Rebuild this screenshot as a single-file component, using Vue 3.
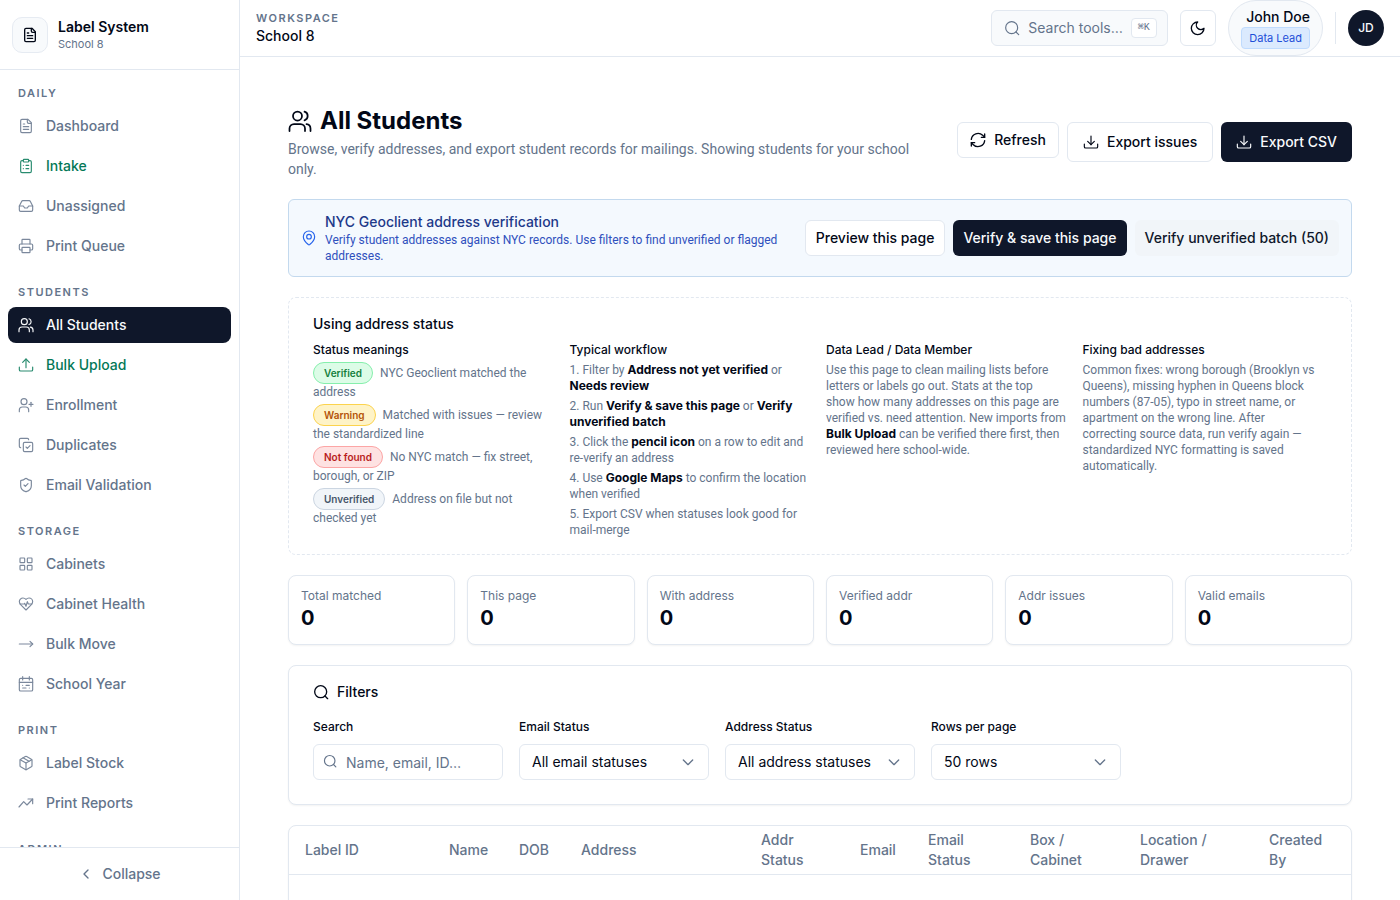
<script setup>
import { ref } from 'vue'

const icons = {
  file: '<path d="M15 2H6a2 2 0 0 0-2 2v16a2 2 0 0 0 2 2h12a2 2 0 0 0 2-2V7Z"/><path d="M14 2v4a2 2 0 0 0 2 2h4"/><path d="M10 9H8"/><path d="M16 13H8"/><path d="M16 17H8"/>',
  clipboard: '<rect width="8" height="4" x="8" y="2" rx="1"/><path d="M16 4h2a2 2 0 0 1 2 2v14a2 2 0 0 1-2 2H6a2 2 0 0 1-2-2V6a2 2 0 0 1 2-2h2"/><path d="M12 11h4"/><path d="M12 16h4"/><path d="M8 11h.01"/><path d="M8 16h.01"/>',
  inbox: '<path d="M22 12h-6l-2 3h-4l-2-3H2"/><path d="M5.45 5.11 2 12v6a2 2 0 0 0 2 2h16a2 2 0 0 0 2-2v-6l-3.45-6.89A2 2 0 0 0 16.76 4H7.24a2 2 0 0 0-1.79 1.11z"/>',
  printer: '<path d="M6 18H4a2 2 0 0 1-2-2v-5a2 2 0 0 1 2-2h16a2 2 0 0 1 2 2v5a2 2 0 0 1-2 2h-2"/><path d="M6 9V3a1 1 0 0 1 1-1h10a1 1 0 0 1 1 1v6"/><rect x="6" y="14" width="12" height="8" rx="1"/>',
  users: '<circle cx="9.500" cy="7" r="4.500"/><path d="M1.500 22v-2.500a4.500 4.500 0 0 1 4.500-4.500h6.500a4.500 4.500 0 0 1 4.500 4.500V22"/><path d="M16.500 2.700a4.500 4.500 0 0 1 0 8.600"/><path d="M18.500 15.200a4.500 4.500 0 0 1 4 4.300V22"/>',
  upload: '<path d="M12 16V3"/><path d="m7 8 5-5 5 5"/><path d="M2 15v4a2 2 0 0 0 2 2h16a2 2 0 0 0 2-2v-4"/>',
  userPlus: '<circle cx="9" cy="7" r="4.500"/><path d="M2 22v-2.500A4.500 4.500 0 0 1 6.500 15h5a4.500 4.500 0 0 1 4.500 4.500V22"/><path d="M19.500 8v6"/><path d="M22.500 11h-6"/>',
  copyCheck: '<path d="m12 15 2 2 4-4"/><rect width="14" height="14" x="8" y="8" rx="2"/><path d="M4 16a2 2 0 0 1-2-2V4a2 2 0 0 1 2-2h10a2 2 0 0 1 2 2"/>',
  shield: '<path d="M20 13c0 5-3.500 7.500-7.660 8.950a1 1 0 0 1-.67-.01C7.500 20.500 4 18 4 13V6a1 1 0 0 1 1-1c2 0 4.500-1.200 6.240-2.720a1.170 1.170 0 0 1 1.520 0C14.510 3.810 17 5 19 5a1 1 0 0 1 1 1z"/><path d="m9 12 2 2 4-4"/>',
  grid: '<rect width="7" height="7" x="3" y="3" rx="1"/><rect width="7" height="7" x="14" y="3" rx="1"/><rect width="7" height="7" x="14" y="14" rx="1"/><rect width="7" height="7" x="3" y="14" rx="1"/>',
  heart: '<path d="M19 14c1.490-1.460 3-3.210 3-5.500A5.500 5.500 0 0 0 16.500 3c-1.760 0-3 .5-4.500 2-1.500-1.500-2.740-2-4.500-2A5.500 5.500 0 0 0 2 8.500c0 2.300 1.500 4.050 3 5.500l7 7Z"/><path d="M3.220 12H9.500l.5-1 2 4.500 2-7 1.500 3.500h5.270"/>',
  arrow: '<path d="m18 8 4 4-4 4"/><path d="M2 12h20"/>',
  calendar: '<path d="M7 1v5"/><path d="M17 1v5"/><rect width="20" height="19" x="2" y="3.500" rx="2"/><path d="M2 9.500h20"/><path d="M7 14h.01"/><path d="M12 14h5"/><path d="M7 18h5"/><path d="M17 18h.01"/>',
  box: '<path d="M11 21.730a2 2 0 0 0 2 0l7-4A2 2 0 0 0 21 16V8a2 2 0 0 0-1-1.730l-7-4a2 2 0 0 0-2 0l-7 4A2 2 0 0 0 3 8v8a2 2 0 0 0 1 1.730z"/><path d="M12 22V12"/><path d="m3.300 7 8.700 5 8.700-5"/><path d="m7.500 4.270 9 5.150"/>',
  trend: '<path d="M15 6h7v7"/><path d="m22 6-8.500 9-5-5L1.500 18"/>',
  chevronLeft: '<path d="m15 18-6-6 6-6"/>',
  chevronDown: '<path d="m5 9 7 7 7-7"/>',
  search: '<circle cx="11.500" cy="11.500" r="9"/><path d="m22 22-4-4"/>',
  moon: '<path d="M11.500 3a6.500 6.500 0 0 0 9.500 9.500 9.500 9.500 0 1 1-9.500-9.500Z"/>',
  refresh: '<path d="M2 11a10 10 0 0 1 17-6l3 3"/><path d="M22 3v5h-5"/><path d="M22 13a10 10 0 0 1-17 6l-3-3"/><path d="M2 21v-5h5"/>',
  download: '<path d="M12 3v13"/><path d="m7 11 5 5 5-5"/><path d="M2 15v4a2 2 0 0 0 2 2h16a2 2 0 0 0 2-2v-4"/>',
  pin: '<path d="M20.500 10c0 5-5.500 10.200-7.400 11.800a1.800 1.800 0 0 1-2.200 0C9 20.200 3.500 15 3.500 10a8.500 8.500 0 0 1 17 0"/><circle cx="12" cy="10" r="3.500"/>'
}

const groups = [
  { title: 'Daily', items: [
    { label: 'Dashboard', icon: 'file' },
    { label: 'Intake', icon: 'clipboard', tone: 'green' },
    { label: 'Unassigned', icon: 'inbox' },
    { label: 'Print Queue', icon: 'printer' }
  ] },
  { title: 'Students', items: [
    { label: 'All Students', icon: 'users', tone: 'active' },
    { label: 'Bulk Upload', icon: 'upload', tone: 'green' },
    { label: 'Enrollment', icon: 'userPlus' },
    { label: 'Duplicates', icon: 'copyCheck' },
    { label: 'Email Validation', icon: 'shield' }
  ] },
  { title: 'Storage', items: [
    { label: 'Cabinets', icon: 'grid' },
    { label: 'Cabinet Health', icon: 'heart' },
    { label: 'Bulk Move', icon: 'arrow' },
    { label: 'School Year', icon: 'calendar' }
  ] },
  { title: 'Print', items: [
    { label: 'Label Stock', icon: 'box' },
    { label: 'Print Reports', icon: 'trend' }
  ] },
  { title: 'Admin', items: [] }
]

const meanings = [
  { tag: 'Verified', tone: 'ok', text: 'NYC Geoclient matched the address' },
  { tag: 'Warning', tone: 'warn', text: 'Matched with issues — review the standardized line' },
  { tag: 'Not found', tone: 'bad', text: 'No NYC match — fix street, borough, or ZIP' },
  { tag: 'Unverified', tone: 'none', text: 'Address on file but not checked yet' }
]

const stats = ['Total matched', 'This page', 'With address', 'Verified addr', 'Addr issues', 'Valid emails']

const selects = [
  { id: 'email-status', label: 'Email Status', option: 'All email statuses' },
  { id: 'address-status', label: 'Address Status', option: 'All address statuses' },
  { id: 'rows', label: 'Rows per page', option: '50 rows' }
]

const columns = [
  { label: 'Label ID', width: 144 },
  { label: 'Name', width: 70 },
  { label: 'DOB', width: 62 },
  { label: 'Address', width: 180 },
  { label: 'Addr Status', width: 99 },
  { label: 'Email', width: 68 },
  { label: 'Email Status', width: 102 },
  { label: 'Box / Cabinet', width: 110 },
  { label: 'Location / Drawer', width: 129 },
  { label: 'Created By', width: 98 }
]

const query = ref('')
</script>

<template>
  <div class="app">
    <aside class="sidebar">
      <div class="brand">
        <span class="logo"><svg class="icon" viewBox="0 0 24 24" v-html="icons.file" /></span>
        <div>
          <div class="brand-name">Label System</div>
          <div class="brand-sub">School 8</div>
        </div>
      </div>
      <nav class="nav">
        <section v-for="g in groups" :key="g.title" class="group">
          <h2>{{ g.title }}</h2>
          <a v-for="i in g.items" :key="i.label" href="#" class="nav-item" :class="i.tone">
            <svg class="icon thin" viewBox="0 0 24 24" v-html="icons[i.icon]" />
            {{ i.label }}
          </a>
        </section>
      </nav>
      <div class="side-foot">
        <button class="collapse"><svg class="icon" viewBox="0 0 24 24" v-html="icons.chevronLeft" />Collapse</button>
      </div>
    </aside>

    <div class="page">
      <header class="topbar">
        <div class="workspace">
          <div class="eyebrow">Workspace</div>
          <div class="school">School 8</div>
        </div>
        <div class="tools">
          <button class="tool-search">
            <svg class="icon thin" viewBox="0 0 24 24" v-html="icons.search" />
            <span>Search tools…</span>
            <kbd>⌘K</kbd>
          </button>
          <button class="square" aria-label="Toggle theme"><svg class="icon" viewBox="0 0 24 24" v-html="icons.moon" /></button>
          <div class="profile">
            <span class="person">John Doe</span>
            <span class="role">Data Lead</span>
          </div>
          <span class="divider"></span>
          <button class="avatar">JD</button>
        </div>
      </header>

      <main class="content">
        <div class="heading">
          <div class="heading-text">
            <h1><svg class="icon thin large" viewBox="0 0 24 24" v-html="icons.users" />All Students</h1>
            <p>Browse, verify addresses, and export student records for mailings. Showing students for your school only.</p>
          </div>
          <div class="actions">
            <button class="btn"><svg class="icon" viewBox="0 0 24 24" v-html="icons.refresh" />Refresh</button>
            <button class="btn tall"><svg class="icon thin" viewBox="0 0 24 24" v-html="icons.download" />Export issues</button>
            <button class="btn tall dark"><svg class="icon thin" viewBox="0 0 24 24" v-html="icons.download" />Export CSV</button>
          </div>
        </div>

        <section class="banner">
          <svg class="icon thin" viewBox="0 0 24 24" v-html="icons.pin" />
          <div class="banner-text">
            <h2>NYC Geoclient address verification</h2>
            <p>Verify student addresses against NYC records. Use filters to find unverified or flagged addresses.</p>
          </div>
          <div class="banner-actions">
            <button class="btn">Preview this page</button>
            <button class="btn dark">Verify &amp; save this page</button>
            <button class="btn soft">Verify unverified batch (50)</button>
          </div>
        </section>

        <section class="guide">
          <h2>Using address status</h2>
          <div class="guide-grid">
            <div>
              <h3>Status meanings</h3>
              <ul>
                <li v-for="m in meanings" :key="m.tag"><span class="tag" :class="m.tone">{{ m.tag }}</span> {{ m.text }}</li>
              </ul>
            </div>
            <div>
              <h3>Typical workflow</h3>
              <ul>
                <li>1. Filter by <strong>Address not yet verified</strong> or <strong>Needs review</strong></li>
                <li>2. Run <strong>Verify &amp; save this page</strong> or <strong>Verify unverified batch</strong></li>
                <li>3. Click the <strong>pencil icon</strong> on a row to edit and re-verify an address</li>
                <li>4. Use <strong>Google Maps</strong> to confirm the location when verified</li>
                <li>5. Export CSV when statuses look good for mail-merge</li>
              </ul>
            </div>
            <div>
              <h3>Data Lead / Data Member</h3>
              <p>Use this page to clean mailing lists before letters or labels go out. Stats at the top<br />show how many addresses on this page are<br />verified vs. need attention. New imports from<br /><strong>Bulk Upload</strong> can be verified there first, then reviewed here school-wide.</p>
            </div>
            <div>
              <h3>Fixing bad addresses</h3>
              <p>Common fixes: wrong borough (Brooklyn vs Queens), missing hyphen in Queens block numbers (87-05), typo in street name, or apartment on the wrong line. After<br />correcting source data, run verify again —<br />standardized NYC formatting is saved<br />automatically.</p>
            </div>
          </div>
        </section>

        <section class="stats">
          <div v-for="s in stats" :key="s" class="stat">
            <div class="stat-label">{{ s }}</div>
            <div class="stat-value">0</div>
          </div>
        </section>

        <section class="filters">
          <h2><svg class="icon" viewBox="0 0 24 24" v-html="icons.search" />Filters</h2>
          <div class="filter-grid">
            <div class="field">
              <label for="student-search">Search</label>
              <div class="control">
                <svg class="icon lead" viewBox="0 0 24 24" v-html="icons.search" />
                <input id="student-search" v-model="query" type="text" placeholder="Name, email, ID…" />
              </div>
            </div>
            <div v-for="s in selects" :key="s.id" class="field">
              <label :for="s.id">{{ s.label }}</label>
              <div class="control">
                <select :id="s.id"><option>{{ s.option }}</option></select>
                <svg class="icon trail" viewBox="0 0 24 24" v-html="icons.chevronDown" />
              </div>
            </div>
          </div>
        </section>

        <section class="table-card">
          <table>
            <colgroup><col v-for="c in columns" :key="c.label" :style="{ width: c.width + 'px' }" /></colgroup>
            <thead><tr><th v-for="c in columns" :key="c.label" scope="col">{{ c.label }}</th></tr></thead>
            <tbody><tr><td :colspan="columns.length"></td></tr></tbody>
          </table>
        </section>
      </main>
    </div>
  </div>
</template>

<style>
body { margin: 0; background: #fff; }
</style>

<style scoped>
* { box-sizing: border-box; }
.app {
  display: flex;
  height: 100vh;
  overflow: hidden;
  font: 14px/20px Inter, "Liberation Sans", sans-serif;
  color: #020817;
}
h1, h2, h3, p, ul { margin: 0; padding: 0; }
ul { list-style: none; }
button, input, select { font: inherit; color: inherit; margin: 0; }
button { cursor: pointer; white-space: nowrap; }
.icon {
  width: 16px;
  height: 16px;
  flex: none;
  fill: none;
  stroke: currentColor;
  stroke-width: 2;
  stroke-linecap: round;
  stroke-linejoin: round;
}
.thin { stroke-width: 1.75; }
.large { width: 24px; height: 24px; }

.sidebar {
  width: 240px;
  flex: none;
  display: flex;
  flex-direction: column;
  border-right: 1px solid #e2e8f0;
}
.brand {
  display: flex;
  align-items: center;
  gap: 10px;
  height: 70px;
  flex: none;
  padding: 0 12px;
  border-bottom: 1px solid #e2e8f0;
}
.logo {
  display: grid;
  place-items: center;
  width: 36px;
  height: 36px;
  border: 1px solid #e6ebf2;
  border-radius: 10px;
  background: #f8fafc;
}
.brand-name { font-weight: 600; line-height: 18px; }
.brand-sub { font-size: 11px; line-height: 16px; color: #64748b; }
.nav { flex: 1; min-height: 0; overflow-y: auto; scrollbar-width: none; padding: 15px 8px 0; }
.group { display: flex; flex-direction: column; gap: 4px; margin-bottom: 20px; }
.group h2 {
  padding: 0 10px;
  height: 19px;
  font-size: 11px;
  line-height: 16px;
  font-weight: 600;
  letter-spacing: 1.5px;
  text-transform: uppercase;
  color: #64748b;
}
.nav-item {
  display: flex;
  align-items: center;
  gap: 12px;
  height: 36px;
  padding: 0 10px;
  border-radius: 8px;
  color: #64748b;
  font-weight: 500;
  text-decoration: none;
}
.nav-item .icon { opacity: 0.85; }
.nav-item.green { color: #047857; }
.nav-item.active { background: #0f172a; color: #f8fafc; }
.nav-item.active .icon { opacity: 1; }
.side-foot { flex: none; padding: 8px; border-top: 1px solid #e2e8f0; }
.collapse {
  display: flex;
  align-items: center;
  justify-content: center;
  gap: 8px;
  width: 100%;
  height: 36px;
  border: 0;
  background: none;
  color: #64748b;
  font-weight: 500;
}

.page { flex: 1; min-width: 0; display: flex; flex-direction: column; }
.topbar {
  display: flex;
  align-items: center;
  justify-content: space-between;
  flex: none;
  height: 57px;
  padding: 0 16px;
  border-bottom: 1px solid #e2e8f0;
}
.eyebrow {
  font-size: 11px;
  line-height: 16px;
  font-weight: 600;
  letter-spacing: 1.5px;
  text-transform: uppercase;
  color: #64748b;
}
.school { font-weight: 500; }
.tools { display: flex; align-items: center; gap: 12px; }
.tool-search {
  display: flex;
  align-items: center;
  gap: 8px;
  width: 177px;
  height: 36px;
  padding: 0 12px;
  border: 1px solid #e2e8f0;
  border-radius: 6px;
  background: #f8fafc;
  color: #64748b;
}
.tool-search kbd {
  margin-left: auto;
  padding: 0 6px;
  border: 1px solid #e2e8f0;
  border-radius: 4px;
  background: #fff;
  font: 500 10px/18px "Liberation Mono", "DejaVu Sans Mono", monospace;
}
.square {
  display: grid;
  place-items: center;
  width: 36px;
  height: 36px;
  padding: 0;
  border: 1px solid #e2e8f0;
  border-radius: 6px;
  background: #fff;
}
.profile {
  display: flex;
  flex-direction: column;
  align-items: flex-end;
  padding: 6px 12px;
  border: 1px solid #e2e8f0;
  border-radius: 28px;
  background: #f8fafc;
}
.person { font-weight: 500; }
.role {
  padding: 2px 7px;
  border: 1px solid #bfdbfe;
  border-radius: 4px;
  background: #dbeafe;
  color: #1d4ed8;
  font-size: 11px;
  line-height: 16px;
}
.divider { width: 1px; height: 32px; background: #e2e8f0; }
.avatar {
  width: 36px;
  height: 36px;
  padding: 0;
  border: 0;
  border-radius: 50%;
  background: #0f172a;
  color: #f8fafc;
  font-size: 12px;
  font-weight: 500;
}

.content {
  flex: 1;
  min-height: 0;
  overflow-y: auto;
  scrollbar-width: none;
  padding: 48px;
}
.content > * + * { margin-top: 20px; }
.heading { display: flex; align-items: center; justify-content: space-between; gap: 16px; }
.heading-text { min-width: 0; }
h1 {
  display: flex;
  align-items: center;
  gap: 8px;
  font-size: 24px;
  line-height: 32px;
  font-weight: 700;
}
.heading p { margin-top: 2px; color: #64748b; }
.heading p, .banner p, .guide p, .guide li { font-family: Roboto, "Liberation Sans", sans-serif; }
.actions, .banner-actions { display: flex; align-items: flex-start; gap: 8px; flex: none; }
.btn {
  display: inline-flex;
  align-items: center;
  justify-content: center;
  gap: 8px;
  height: 36px;
  padding: 0 12px;
  border: 1px solid #e2e8f0;
  border-radius: 6px;
  background: #fff;
  font-weight: 500;
}
.tall { height: 40px; padding: 0 15px; }
.banner .btn { padding: 0 10px; }
.dark { border: 0; background: #0f172a; color: #f8fafc; }
.soft { border: 0; background: #f1f5f9; color: #0f172a; }

.banner {
  display: flex;
  align-items: center;
  gap: 8px;
  padding: 12px;
  border: 1px solid #c3d9ee;
  border-radius: 6px;
  background: #f4f9fe;
}
.banner > .icon { color: #2563eb; }
.banner-text { flex: 1; min-width: 0; }
.banner h2 { font-size: 14px; font-weight: 500; color: #1e3a8a; }
.banner p { font-size: 12px; line-height: 16px; color: #2f50bd; }

.guide { padding: 16px 24px; border: 1px dashed #e2e8f0; border-radius: 8px; }
.guide h2 { font-size: 14px; font-weight: 500; }
.guide-grid {
  display: grid;
  grid-template-columns: repeat(4, minmax(0, 1fr));
  gap: 12px;
  margin-top: 8px;
  font-size: 12px;
  line-height: 16px;
  color: #64748b;
}
.guide h3 { margin-bottom: 4px; font-size: 12px; font-weight: 500; color: #020817; }
.guide li + li { margin-top: 4px; }
.guide strong { font-family: Inter, "Liberation Sans", sans-serif; font-weight: 700; color: #020817; }
.tag {
  display: inline-block;
  margin-right: 4px;
  padding: 2px 10px;
  border: 1px solid;
  border-radius: 11px;
  font-family: Inter, "Liberation Sans", sans-serif;
  font-size: 10px;
  line-height: 16px;
  font-weight: 600;
}
.ok { background: #dcfce7; border-color: #86efac; color: #15803d; }
.warn { background: #fef3c7; border-color: #fcd34d; color: #b45309; }
.bad { background: #fee2e2; border-color: #fca5a5; color: #b91c1c; }
.none { background: #f1f5f9; border-color: #cbd5e1; color: #475569; }

.stats { display: grid; grid-template-columns: repeat(6, minmax(0, 1fr)); gap: 12px; }
.stat, .filters, .table-card {
  border: 1px solid #e2e8f0;
  border-radius: 8px;
  background: #fff;
  box-shadow: 0 1px 2px rgba(0, 0, 0, 0.05);
}
.stat { padding: 12px; }
.stat-label { font-size: 12px; line-height: 16px; color: #64748b; }
.stat-value { font-size: 20px; line-height: 28px; font-weight: 700; }

.filters { padding: 16px 24px 24px; }
.filters h2 { display: flex; align-items: center; gap: 8px; font-size: 14px; font-weight: 500; }
.filter-grid {
  display: grid;
  grid-template-columns: repeat(5, minmax(0, 1fr));
  gap: 16px;
  margin-top: 16px;
}
.field label { display: block; margin-bottom: 8px; font-size: 12px; line-height: 18px; font-weight: 500; }
.control { position: relative; }
.control input, .control select {
  width: 100%;
  height: 36px;
  padding: 0 12px;
  border: 1px solid #e2e8f0;
  border-radius: 6px;
  background: #fff;
  appearance: none;
}
.control input { padding-left: 32px; }
.control input::placeholder { color: #64748b; opacity: 1; }
.control .icon { position: absolute; top: 10px; color: #64748b; pointer-events: none; }
.control .lead { left: 10px; width: 14px; height: 14px; }
.trail { right: 13px; }

.table-card { overflow: hidden; }
table { width: 100%; table-layout: fixed; border-collapse: collapse; }
th {
  height: 48px;
  padding: 4px 16px;
  border-bottom: 1px solid #e2e8f0;
  font-weight: 500;
  text-align: left;
  vertical-align: middle;
  color: #64748b;
}
td { height: 96px; }
</style>
